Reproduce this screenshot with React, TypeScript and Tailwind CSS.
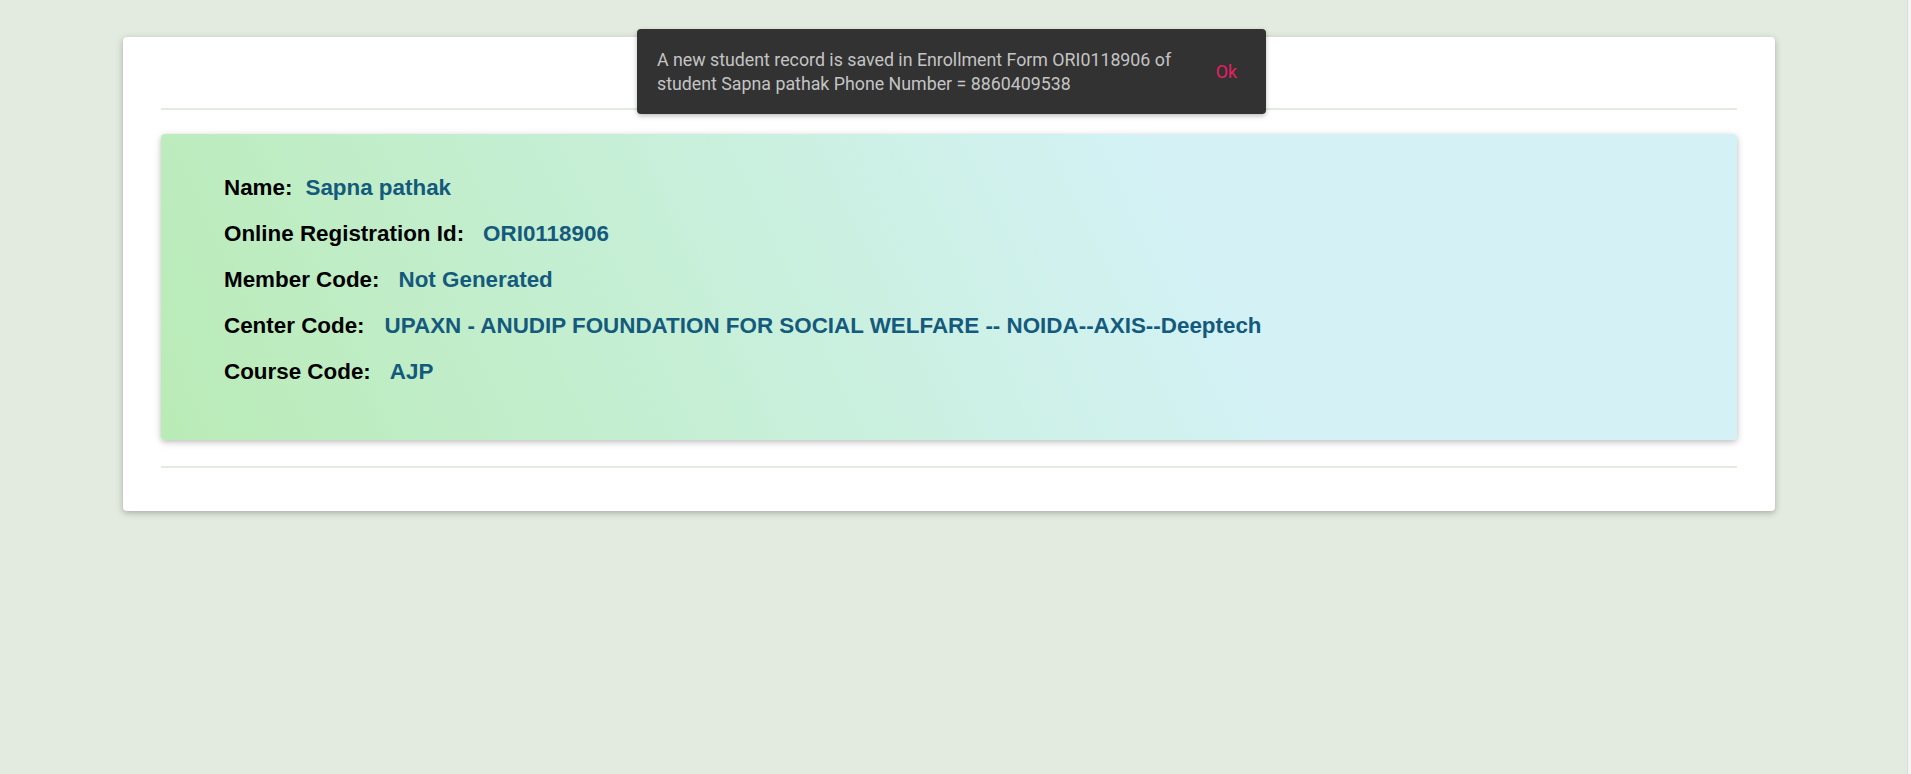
const details = [
  { label: "Name:", value: "Sapna pathak", gap: "ml-[13px]" },
  { label: "Online Registration Id:", value: "ORI0118906", gap: "ml-[19px]" },
  { label: "Member Code:", value: "Not Generated", gap: "ml-[19px]" },
  {
    label: "Center Code:",
    value: "UPAXN - ANUDIP FOUNDATION FOR SOCIAL WELFARE -- NOIDA--AXIS--Deeptech",
    gap: "ml-[20px]",
  },
  { label: "Course Code:", value: "AJP", gap: "ml-[19px]" },
];

function Toast() {
  return (
    <div className="absolute left-[637px] top-[29px] flex w-[629px] items-center rounded-[4px] bg-[#323232] pb-[18px] pl-[20px] pr-[29px] pt-[19px] shadow-[0_2px_5px_rgba(0,0,0,0.26)] font-['Roboto',sans-serif]">
      <div className="w-[540px] text-[17.8px] leading-[24px] text-[#c4c4c4]">
        A new student record is saved in Enrollment Form ORI0118906 of student
        Sapna pathak Phone Number = 8860409538
      </div>
      <button className="ml-auto text-[17.8px] leading-[24px] text-[#e91e63]">
        Ok
      </button>
    </div>
  );
}

export default function App() {
  return (
    <div className="relative flex min-h-[774px] bg-[#e3ebe0]">
      <main className="flex-1 pt-[37px]">
        <div className="ml-[123px] w-[1652px] rounded-[4px] bg-white px-[38px] pb-[43px] pt-[71px] shadow-[0_2px_5px_0_rgba(0,0,0,0.16),0_2px_10px_0_rgba(0,0,0,0.12)]">
          <div className="h-[2px] bg-[#e3ebdc]" />
          <div className="mt-[24px] rounded-[4px] bg-[linear-gradient(65deg,#b9ebb6_0%,#c6efd6_33%,#d4f2f6_66%)] pb-[45px] pl-[63px] pt-[31px] shadow-[0_2px_5px_0_rgba(0,0,0,0.16),0_2px_10px_0_rgba(0,0,0,0.12)] font-['Liberation_Sans',Arial,sans-serif] text-[22.4px] font-bold">
            {details.map(({ label, value, gap }) => (
              <div key={label} className="flex leading-[46px]">
                <span className="text-black">{label}</span>
                <span className={`${gap} text-[#145a7c]`}>{value}</span>
              </div>
            ))}
          </div>
          <div className="mt-[26px] h-[2px] bg-[#e3ebdc]" />
        </div>
      </main>
      <div className="w-[4px] border-l border-[#d9ddd6] bg-[#f4f4f4]" />
      <Toast />
    </div>
  );
}
